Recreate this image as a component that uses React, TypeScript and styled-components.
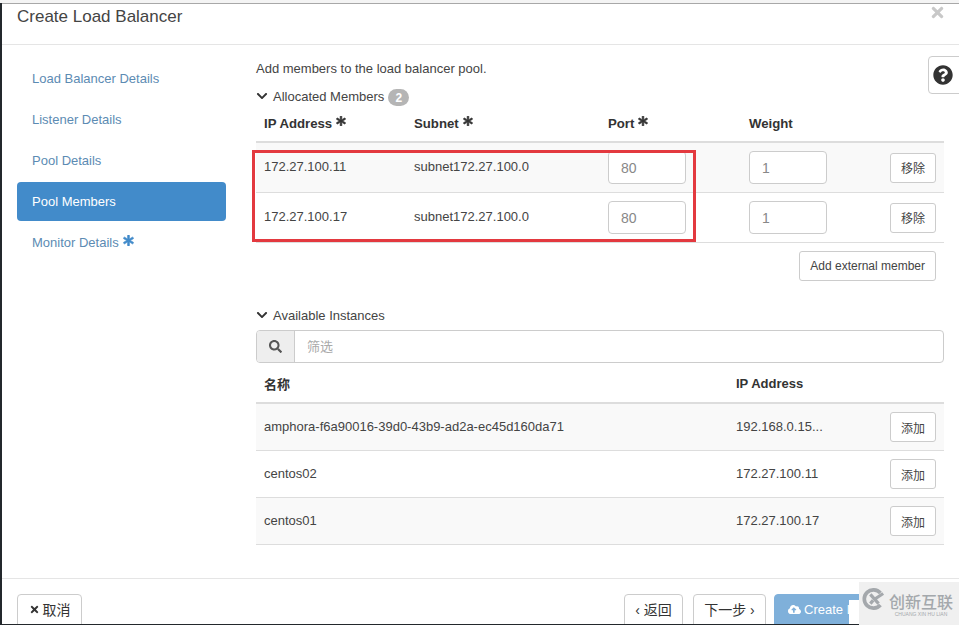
import { createGlobalStyle } from 'styled-components'
import styled from 'styled-components'
import { FaAsterisk, FaChevronDown, FaCloudUploadAlt, FaQuestionCircle, FaSearch, FaTimes } from 'react-icons/fa'

const STEPS = [
  { label: 'Load Balancer Details' },
  { label: 'Listener Details' },
  { label: 'Pool Details' },
  { label: 'Pool Members', active: true },
  { label: 'Monitor Details', required: true },
]

const MEMBERS = [
  { ip: '172.27.100.11', subnet: 'subnet172.27.100.0', striped: true },
  { ip: '172.27.100.17', subnet: 'subnet172.27.100.0' },
]

const INSTANCES = [
  { name: 'amphora-f6a90016-39d0-43b9-ad2a-ec45d160da71', ip: '192.168.0.15...', striped: true },
  { name: 'centos02', ip: '172.27.100.11' },
  { name: 'centos01', ip: '172.27.100.17', striped: true },
]

const GlobalStyle = createGlobalStyle`
  html, body {
    margin: 0;
    padding: 0;
    background: #fff;
  }
  body {
    font-family: 'Liberation Sans', 'Noto Sans CJK SC', sans-serif;
    font-size: 13px;
    color: #333;
  }
  * {
    box-sizing: border-box;
  }
`

const Page = styled.div`
  position: relative;
  width: 959px;
  height: 625px;
  overflow: hidden;
  padding: 3px 0 1px 2px;
  background: linear-gradient(#f4f4f4 3px, #23282c 3px);
`

const Modal = styled.div`
  height: 100%;
  display: flex;
  flex-direction: column;
  background: #fff;
  border-top: 1px solid #a8a8a8;
  overflow: hidden;
`

const ModalHeader = styled.header`
  flex: none;
  height: 41px;
  display: flex;
  justify-content: space-between;
  align-items: flex-start;
  padding: 2px 13px 0 15px;
  border-bottom: 1px solid #e5e5e5;
`

const Title = styled.h4`
  margin: 1px 0 0;
  font-size: 17px;
  font-weight: 400;
  line-height: 20px;
  color: #444;
`

const Close = styled.span`
  display: flex;
  margin-top: -2px;
  color: #c8c8c8;
  font-size: 17px;
`

const ModalBody = styled.div`
  flex: 1;
  display: flex;
  min-height: 0;
`

const Sidebar = styled.nav`
  flex: none;
  width: 209px;
  margin: 14px 0 0 15px;
  display: flex;
  flex-direction: column;
  gap: 2px;
`

const StepLink = styled.a<{ $active?: boolean }>`
  height: 39px;
  display: flex;
  align-items: center;
  gap: 4px;
  padding: 0 15px;
  border-radius: 4px;
  font-size: 13px;
  color: ${(p) => (p.$active ? '#fff' : '#5c8bb3')};
  background: ${(p) => (p.$active ? '#428bca' : 'transparent')};
`

const StepMark = styled.span`
  display: flex;
  margin-top: -4px;
  color: #428bca;
  font-size: 11px;

  svg {
    stroke: currentColor;
    stroke-width: 30;
  }
`

const Content = styled.main`
  position: relative;
  flex: none;
  width: 688px;
  margin: 13px 0 0 30px;
`

const HelpButton = styled.button`
  position: absolute;
  top: -2px;
  left: 672px;
  width: 40px;
  height: 38px;
  padding: 0 0 0 4px;
  display: flex;
  align-items: center;
  background: #fff;
  border: 1px solid #ccc;
  border-radius: 4px 0 0 4px;
  color: #333;
  font-size: 20px;
`

const Intro = styled.p`
  margin: 0;
  height: 21px;
  padding-top: 1px;
  font-size: 13px;
  line-height: 20px;
  color: #444;
`

const SectionTitle = styled.div<{ $top?: number }>`
  display: flex;
  align-items: center;
  height: 20px;
  gap: 5px;
  margin-top: ${(p) => p.$top ?? 0}px;
  font-size: 13px;
  color: #444;

  svg {
    font-size: 12px;
    color: #333;
  }
`

const Badge = styled.span`
  width: 21px;
  height: 17px;
  margin: 3px 0 0 -1px;
  display: flex;
  align-items: center;
  justify-content: center;
  border-radius: 10px;
  background: #b5b5b5;
  color: #fff;
  font-size: 12px;
  font-weight: 700;
`

const AllocatedHead = styled.div`
  height: 37px;
  display: grid;
  grid-template-columns: 150px 194px 141px 1fr;
  align-items: center;
  padding: 0 8px;
  border-bottom: 2px solid #ddd;
  color: #333;
`

const HeadCell = styled.span`
  display: flex;
  align-items: center;
  gap: 4px;
  font-size: 13.2px;
  font-weight: 700;

  svg {
    font-size: 10px;
    margin-top: -5px;
    stroke: currentColor;
    stroke-width: 30;
  }
`

const MemberRow = styled.div<{ $striped?: boolean }>`
  height: 50px;
  display: grid;
  grid-template-columns: 150px 194px 141px 1fr auto;
  align-items: center;
  padding: 0 8px;
  border-bottom: 1px solid #ddd;
  background: ${(p) => (p.$striped ? '#f9f9f9' : '#fff')};
  font-size: 13px;
  color: #444;
`

const CellText = styled.span`
  margin-top: -3px;
`

const NumberBox = styled.div`
  width: 78px;
  height: 33px;
  display: flex;
  align-items: center;
  padding-left: 12px;
  background: #fff;
  border: 1px solid #ccc;
  border-radius: 4px;
  font-size: 14px;
  color: #888;
`

const Button = styled.button`
  height: 30px;
  padding: 0 10px;
  background: #fff;
  border: 1px solid #ccc;
  border-radius: 3px;
  font-family: inherit;
  font-size: 12px;
  color: #444;
`

const RowAction = styled(Button)`
  width: 46px;
  padding: 0;
`

const AddRow = styled.div`
  display: flex;
  justify-content: flex-end;
  padding: 8px 8px 0 0;
  height: 62px;
`

const SearchBar = styled.div`
  height: 33px;
  margin-top: 5px;
  display: flex;
  border: 1px solid #ccc;
  border-radius: 4px;
  overflow: hidden;
`

const SearchAddon = styled.span`
  flex: none;
  width: 38px;
  display: flex;
  align-items: center;
  justify-content: center;
  background: #eee;
  border-right: 1px solid #ccc;
  color: #555;
  font-size: 13px;
`

const SearchField = styled.span`
  flex: 1;
  display: flex;
  align-items: center;
  padding: 0 0 2px 12px;
  font-size: 13px;
  color: #aaa;
`

const InstanceHead = styled.div`
  height: 41px;
  display: grid;
  grid-template-columns: 472px 1fr;
  align-items: center;
  padding: 2px 8px 0;
  border-bottom: 2px solid #ddd;
  font-size: 13px;
  font-weight: 700;
  color: #333;
`

const InstanceRow = styled.div<{ $striped?: boolean }>`
  height: 47px;
  display: grid;
  grid-template-columns: 472px 1fr auto;
  align-items: center;
  padding: 0 8px;
  border-bottom: 1px solid #ddd;
  background: ${(p) => (p.$striped ? '#f9f9f9' : '#fff')};
  font-size: 13px;
  color: #444;
`

const InstanceText = styled.span`
  margin-top: -2px;
`

const Footer = styled.footer`
  flex: none;
  height: 46px;
  display: flex;
  justify-content: space-between;
  padding: 15px 15px 0 15px;
  border-top: 1px solid #e5e5e5;
`

const FooterRight = styled.div`
  display: flex;
  gap: 10px;
`

const FooterButton = styled.button<{ $primary?: boolean; $width: number }>`
  flex: none;
  width: ${(p) => p.$width}px;
  height: 36px;
  padding: 0 0 6px;
  display: flex;
  align-items: center;
  justify-content: center;
  gap: 3px;
  font-family: inherit;
  font-size: 14px;
  border: 1px solid ${(p) => (p.$primary ? '#7fb0da' : '#ccc')};
  border-radius: 4px;
  background: ${(p) => (p.$primary ? '#7fb0da' : '#fff')};
  color: ${(p) => (p.$primary ? '#fff' : '#333')};
  white-space: nowrap;
  overflow: hidden;
`

const CreateButton = styled(FooterButton)`
  justify-content: flex-start;
  padding-left: 13px;
  margin-left: -2px;
  font-size: 13px;
`

const CancelIcon = styled(FaTimes)`
  font-size: 11px;
`

const RedBox = styled.div`
  position: absolute;
  left: 252px;
  top: 150px;
  width: 444px;
  height: 92px;
  border: 3px solid #e3393f;
  pointer-events: none;
`

const Watermark = styled.div`
  position: absolute;
  right: 0;
  bottom: 0;
  width: 100px;
  height: 43px;
  padding: 0 0 0 3px;
  display: flex;
  align-items: center;
  gap: 3px;
  background: #f0f0f0;

  &::before {
    content: '';
    position: absolute;
    left: -10px;
    bottom: 1px;
    width: 10px;
    height: 24px;
    background: #fff;
  }

  svg {
    margin-top: -9px;
  }
`

const WatermarkText = styled.div`
  display: flex;
  flex-direction: column;
  align-items: center;
  margin-top: 4px;
  color: #a4a8ac;
`

const WatermarkName = styled.span`
  font-size: 16px;
  line-height: 17px;
  font-weight: 500;
  white-space: nowrap;
`

const WatermarkSub = styled.span`
  font-size: 5px;
  line-height: 6px;
  white-space: nowrap;
`

function Required({ label }: { label: string }) {
  return (
    <HeadCell>
      {label}
      <FaAsterisk />
    </HeadCell>
  )
}

export default function App() {
  return (
    <Page>
      <GlobalStyle />
      <Modal>
        <ModalHeader>
          <Title>Create Load Balancer</Title>
          <Close>
            <FaTimes />
          </Close>
        </ModalHeader>

        <ModalBody>
          <Sidebar>
            {STEPS.map((step) => (
              <StepLink key={step.label} $active={step.active}>
                {step.label}
                {step.required && (
                  <StepMark>
                    <FaAsterisk />
                  </StepMark>
                )}
              </StepLink>
            ))}
          </Sidebar>

          <Content>
            <HelpButton aria-label="Help">
              <FaQuestionCircle />
            </HelpButton>
            <Intro>Add members to the load balancer pool.</Intro>

            <SectionTitle $top={7}>
              <FaChevronDown />
              Allocated Members
              <Badge>2</Badge>
            </SectionTitle>

            <AllocatedHead>
              <Required label="IP Address" />
              <Required label="Subnet" />
              <Required label="Port" />
              <HeadCell>Weight</HeadCell>
            </AllocatedHead>

            {MEMBERS.map((member) => (
              <MemberRow key={member.ip} $striped={member.striped}>
                <CellText>{member.ip}</CellText>
                <CellText>{member.subnet}</CellText>
                <NumberBox>80</NumberBox>
                <NumberBox>1</NumberBox>
                <RowAction>移除</RowAction>
              </MemberRow>
            ))}

            <AddRow>
              <Button>Add external member</Button>
            </AddRow>

            <SectionTitle>
              <FaChevronDown />
              Available Instances
            </SectionTitle>

            <SearchBar>
              <SearchAddon>
                <FaSearch />
              </SearchAddon>
              <SearchField>筛选</SearchField>
            </SearchBar>

            <InstanceHead>
              <span>名称</span>
              <span>IP Address</span>
            </InstanceHead>

            {INSTANCES.map((instance) => (
              <InstanceRow key={instance.name} $striped={instance.striped}>
                <InstanceText>{instance.name}</InstanceText>
                <InstanceText>{instance.ip}</InstanceText>
                <RowAction>添加</RowAction>
              </InstanceRow>
            ))}
          </Content>
        </ModalBody>

        <Footer>
          <FooterButton $width={65}>
            <CancelIcon />
            取消
          </FooterButton>
          <FooterRight>
            <FooterButton $width={59}>‹ 返回</FooterButton>
            <FooterButton $width={73}>下一步 ›</FooterButton>
            <CreateButton $primary $width={170}>
              <FaCloudUploadAlt />
              Create Load Balancer
            </CreateButton>
          </FooterRight>
        </Footer>
      </Modal>

      <RedBox />

      <Watermark>
        <svg width="24" height="22" viewBox="0 0 26 24" fill="none">
          <path d="M20 5.5A10 10 0 1 0 20 18.5" stroke="#a4a8ac" strokeWidth="4" />
          <path d="M9 7l9 10M23 6l-9 6M9 17l3-3.5" stroke="#a4a8ac" strokeWidth="3.5" />
        </svg>
        <WatermarkText>
          <WatermarkName>创新互联</WatermarkName>
          <WatermarkSub>CHUANG XIN HU LIAN</WatermarkSub>
        </WatermarkText>
      </Watermark>
    </Page>
  )
}
